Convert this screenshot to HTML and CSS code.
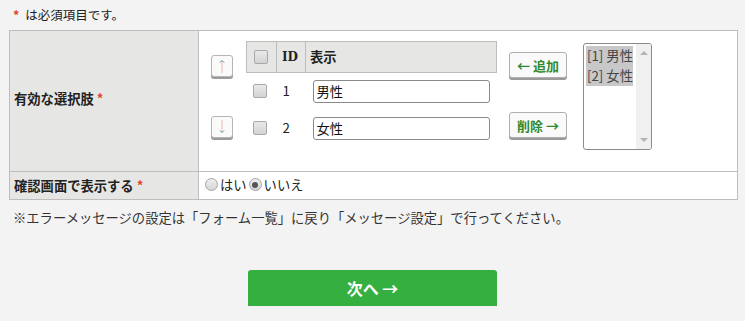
FILE: index.html
```html
<!DOCTYPE html>
<html lang="ja">
<head>
  <meta charset="UTF-8">
  <title>選択肢の設定</title>
  <link rel="stylesheet" href="styles.css">
</head>
<body>
  <p class="req-note"><span class="req">*</span> は必須項目です。</p>

  <table class="form-table">
    <tr class="row-choices">
      <th class="f-label">有効な選択肢 <span class="req">*</span></th>
      <td class="f-field">
        <div class="choices">
          <div class="move-col">
            <button class="move-btn" type="button" title="上へ">
              <svg width="10" height="16" viewBox="0 0 10 16"><line x1="5" y1="3" x2="5" y2="15" stroke="#eeb4b4" stroke-width="1"/><path d="M3 4.5 L5 2.5 L7 4.5" fill="none" stroke="#4a9a8a" stroke-width="1"/></svg>
            </button>
            <button class="move-btn" type="button" title="下へ">
              <svg width="10" height="16" viewBox="0 0 10 16"><line x1="5" y1="1" x2="5" y2="13" stroke="#eeb4b4" stroke-width="1"/><path d="M3 11.5 L5 13.5 L7 11.5" fill="none" stroke="#4a9a8a" stroke-width="1"/></svg>
            </button>
          </div>

          <table class="item-table">
            <thead>
              <tr>
                <th class="c-check"><input type="checkbox"></th>
                <th class="c-id">ID</th>
                <th class="c-label">表示</th>
              </tr>
            </thead>
            <tbody>
              <tr>
                <td class="c-check"><input type="checkbox"></td>
                <td class="c-id">1</td>
                <td class="c-label"><input type="text" value="男性"></td>
              </tr>
              <tr>
                <td class="c-check"><input type="checkbox"></td>
                <td class="c-id">2</td>
                <td class="c-label"><input type="text" value="女性"></td>
              </tr>
            </tbody>
          </table>

          <div class="addrm-col">
            <button class="act-btn" type="button">← 追加</button>
            <button class="act-btn" type="button">削除 →</button>
          </div>

          <div class="listbox">
            <div class="list-items">
              <div class="list-item">[1] 男性</div>
              <div class="list-item">[2] 女性</div>
            </div>
            <div class="list-scroll">
              <span class="sc-up"></span>
              <span class="sc-down"></span>
            </div>
          </div>
        </div>
      </td>
    </tr>
    <tr class="row-confirm">
      <th class="f-label">確認画面で表示する <span class="req">*</span></th>
      <td class="f-field">
        <label class="radio"><input type="radio" name="confirm"><span>はい</span></label><label class="radio"><input type="radio" name="confirm" checked><span>いいえ</span></label>
      </td>
    </tr>
  </table>

  <p class="error-note">※エラーメッセージの設定は「フォーム一覧」に戻り「メッセージ設定」で行ってください。</p>

  <div class="next-wrap">
    <button class="next-btn" type="button">次へ →</button>
  </div>
</body>
</html>
```

FILE: styles.css
```css
:root {
  --page-bg: #f3f3f3;
  --text: #222222;
  --head-bg: #e6e7e5;
  --line: #bdbdbd;
  --req: #e0452a;
  --green: #2f8a2f;
}

body {
  margin: 0;
  padding: 0 7px 0 9px;
  background: var(--page-bg);
  color: var(--text);
  font-family: "Noto Sans CJK JP", "Noto Sans", sans-serif;
  font-size: 13.3px;
  line-height: 20px;
}

.req {
  color: var(--req);
  font-weight: bold;
}

.req-note {
  margin: 0;
  padding: 5px 0 0 4px;
  height: 25px;
  font-size: 12.5px;
}

.req-note .req {
  margin-right: 3px;
}

/* 外枠のテーブル */
.form-table {
  width: 729px;
  border-collapse: collapse;
  background: #ffffff;
}

.f-label {
  width: 184px;
  background: var(--head-bg);
  border: 1px solid var(--line);
  text-align: left;
  padding: 0 0 0 4px;
  font-weight: bold;
  vertical-align: middle;
  white-space: nowrap;
}

.f-field {
  border: 1px solid var(--line);
  padding: 0;
  vertical-align: top;
}

.row-choices > .f-field {
  height: 140px;
}

.row-choices > .f-label {
  padding-bottom: 4px;
  height: 136px;
}

.row-confirm > .f-label,
.row-confirm > .f-field {
  height: 27px;
}

.row-confirm > .f-field {
  padding-left: 5px;
  vertical-align: middle;
}

.choices {
  display: flex;
  align-items: flex-start;
  padding: 10px 0 0 12px;
}

/* 上下移動ボタン */
.move-col {
  display: flex;
  flex-direction: column;
  gap: 39px;
  margin-top: 14px;
}

.move-btn {
  width: 22px;
  height: 22px;
  padding: 0;
  border: 1px solid #b5b5b5;
  border-radius: 3px;
  background: #fafafa;
  box-shadow: 0 2px 0 #9a9a9a;
  display: flex;
  align-items: center;
  justify-content: center;
}

/* 項目テーブル */
.item-table {
  margin-left: 13px;
  width: 251px;
  border-collapse: collapse;
  table-layout: fixed;
  flex: none;
}

.item-table th,
.item-table td {
  box-sizing: border-box;
}

.item-table th {
  height: 31px;
  background: var(--head-bg);
  border: 1px solid var(--line);
  text-align: left;
  padding: 0 0 0 4px;
  font-weight: bold;
  font-size: 13.3px;
}

.item-table th.c-id {
  font-family: "DejaVu Serif", serif;
  font-size: 12px;
  padding-left: 5px;
}

.item-table td {
  border: none;
  height: 37px;
  padding: 0;
  vertical-align: middle;
}

.c-check {
  width: 30px;
}

.c-id {
  width: 29px;
}

.item-table th.c-check {
  padding-left: 7px;
}

.item-table td.c-check {
  padding-left: 6px;
}

.item-table td.c-id {
  padding-left: 6px;
}

.item-table td.c-label {
  padding-left: 7px;
}

.item-table input[type="checkbox"] {
  appearance: none;
  display: block;
  margin: 0;
  width: 14px;
  height: 14px;
  border: 1px solid #a9a9a9;
  border-radius: 2px;
  background: linear-gradient(#e9e9e9, #d3d3d3);
}

.item-table input[type="text"] {
  box-sizing: border-box;
  width: 177px;
  height: 23px;
  border: 1px solid #8a8a8a;
  border-radius: 3px;
  padding: 0 3px;
  font-family: "Noto Sans CJK JP", sans-serif;
  font-size: 13.3px;
  color: #111111;
  display: block;
}

/* 追加・削除ボタン */
.addrm-col {
  display: flex;
  flex-direction: column;
  gap: 34px;
  margin: 11px 0 0 12px;
}

.act-btn {
  width: 58px;
  height: 26px;
  padding: 0;
  border: 1px solid #b0b0b0;
  border-radius: 3px;
  background: #fafafa;
  box-shadow: 0 2px 0 #9a9a9a;
  color: var(--green);
  font-family: "Noto Sans CJK JP", sans-serif;
  font-size: 13px;
  font-weight: bold;
}

/* 選択済みリスト */
.listbox {
  margin: 2px 0 0 16px;
  width: 69px;
  height: 107px;
  box-sizing: border-box;
  border: 1px solid #8a8a8a;
  border-radius: 3px;
  background: #ffffff;
  display: flex;
  overflow: hidden;
}

.list-items {
  flex: 1;
  padding: 2px 0 0 2px;
}

.list-item {
  background: #c8c8c8;
  color: #444444;
  height: 20px;
  line-height: 20px;
  padding-left: 1px;
  margin-right: 3px;
  white-space: nowrap;
}

.list-scroll {
  width: 16px;
  background: #f0f0f0;
  position: relative;
}

.sc-up,
.sc-down {
  position: absolute;
  left: 4px;
  width: 0;
  height: 0;
  border-left: 4px solid transparent;
  border-right: 4px solid transparent;
}

.sc-up {
  top: 7px;
  border-bottom: 4px solid #b5b5b5;
}

.sc-down {
  bottom: 7px;
  border-top: 4px solid #b5b5b5;
}

/* ラジオ */
.radio {
  display: inline-flex;
  align-items: center;
}

.radio input {
  appearance: none;
  margin: 0 2px 0 1px;
  width: 13px;
  height: 13px;
  border: 1px solid #a5a5a5;
  border-radius: 50%;
  background: linear-gradient(#efefef, #d5d5d5);
  box-sizing: border-box;
  position: relative;
}

.radio input:checked::after {
  content: "";
  position: absolute;
  left: 2.5px;
  top: 2.5px;
  width: 6px;
  height: 6px;
  border-radius: 50%;
  background: #555555;
}

.radio span {
  margin-right: 1px;
}

.error-note {
  margin: 8px 0 0 4px;
  color: #333333;
}

.next-wrap {
  display: flex;
  justify-content: center;
  margin-top: 42px;
  margin-left: -2px;
}

.next-btn {
  width: 249px;
  height: 36px;
  border: none;
  border-radius: 3px;
  background: #35b040;
  box-shadow: 0 3px 0 #5a8a4a;
  color: #ffffff;
  font-family: "Noto Sans CJK JP", sans-serif;
  font-size: 16px;
  font-weight: bold;
}
```
